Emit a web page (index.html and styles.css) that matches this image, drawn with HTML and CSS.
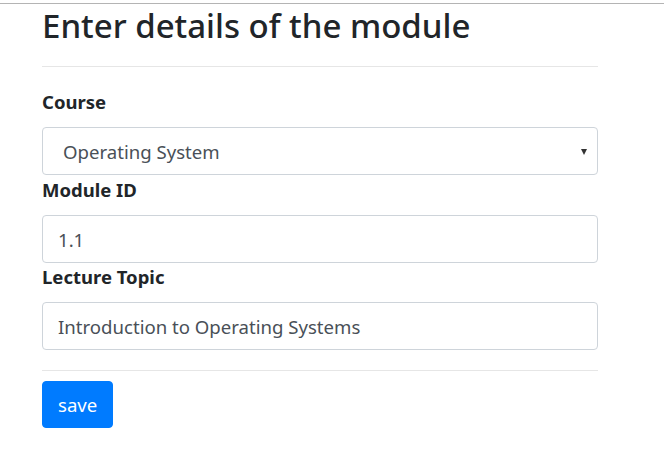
FILE: index.html
```html
<!DOCTYPE html>
<html lang="en">
<head>
<meta charset="utf-8">
<title>Module</title>
<link rel="stylesheet" href="styles.css">
</head>
<body>
<div class="topline"></div>
<main class="container">
  <h2 class="title">Enter details of the module</h2>
  <hr class="rule rule-top">
  <form class="form">
    <div class="group group-first">
      <label class="label" for="course">Course</label>
      <div class="select-wrap">
        <select id="course" class="control select">
          <option>Operating System</option>
        </select>
      </div>
    </div>
    <div class="group">
      <label class="label" for="mid">Module ID</label>
      <input id="mid" class="control" type="text" value="1.1">
    </div>
    <div class="group group-last">
      <label class="label" for="topic">Lecture Topic</label>
      <input id="topic" class="control" type="text" value="Introduction to Operating Systems">
    </div>
    <hr class="rule rule-bottom">
    <button type="button" class="btn">save</button>
  </form>
</main>
</body>
</html>
```

FILE: styles.css
```css
* { box-sizing: border-box; }
html, body { margin: 0; padding: 0; background: #fff; }
body {
  font-family: "Noto Sans", "Open Sans", sans-serif;
  color: #212529;
}
.topline {
  height: 4px;
  border-bottom: 1px solid #b4b4b4;
}
.container {
  width: 556px;
  margin-left: 42px;
}
.title {
  margin: 0;
  padding-top: 2px;
  font-size: 33px;
  font-weight: 500;
  line-height: 40px;
}
.rule {
  border: 0;
  border-top: 1px solid #e6e6e6;
  margin: 0;
}
.rule-top { margin-top: 20px; }
.rule-bottom { margin-top: 20px; margin-bottom: 10px; }
.group { display: flex; flex-direction: column; }
.label {
  font-weight: 700;
  font-size: 18.5px;
  line-height: 24px;
  margin-top: 3px;
  margin-bottom: 13px;
}
.group-first .label { margin-top: 23px; }
.group-last .label { margin-top: 2px; }
.control {
  display: block;
  width: 100%;
  height: 48px;
  padding: 0 15px;
  font-family: inherit;
  font-size: 18.6px;
  color: #495057;
  background: #fff;
  border: 1px solid #ced4da;
  border-radius: 4px;
  outline: none;
}
.select-wrap { position: relative; }
.select {
  -webkit-appearance: none;
  appearance: none;
  padding-left: 20px;
}
.select-wrap::after {
  content: "";
  position: absolute;
  right: 11px;
  top: 22px;
  border-left: 3.5px solid transparent;
  border-right: 3.5px solid transparent;
  border-top: 6px solid #333;
}
.btn {
  display: inline-block;
  height: 47px;
  padding: 0 15px;
  font-family: inherit;
  font-size: 18.6px;
  color: #fff;
  background: #007bff;
  border: 1px solid #007bff;
  border-radius: 4px;
}
```
